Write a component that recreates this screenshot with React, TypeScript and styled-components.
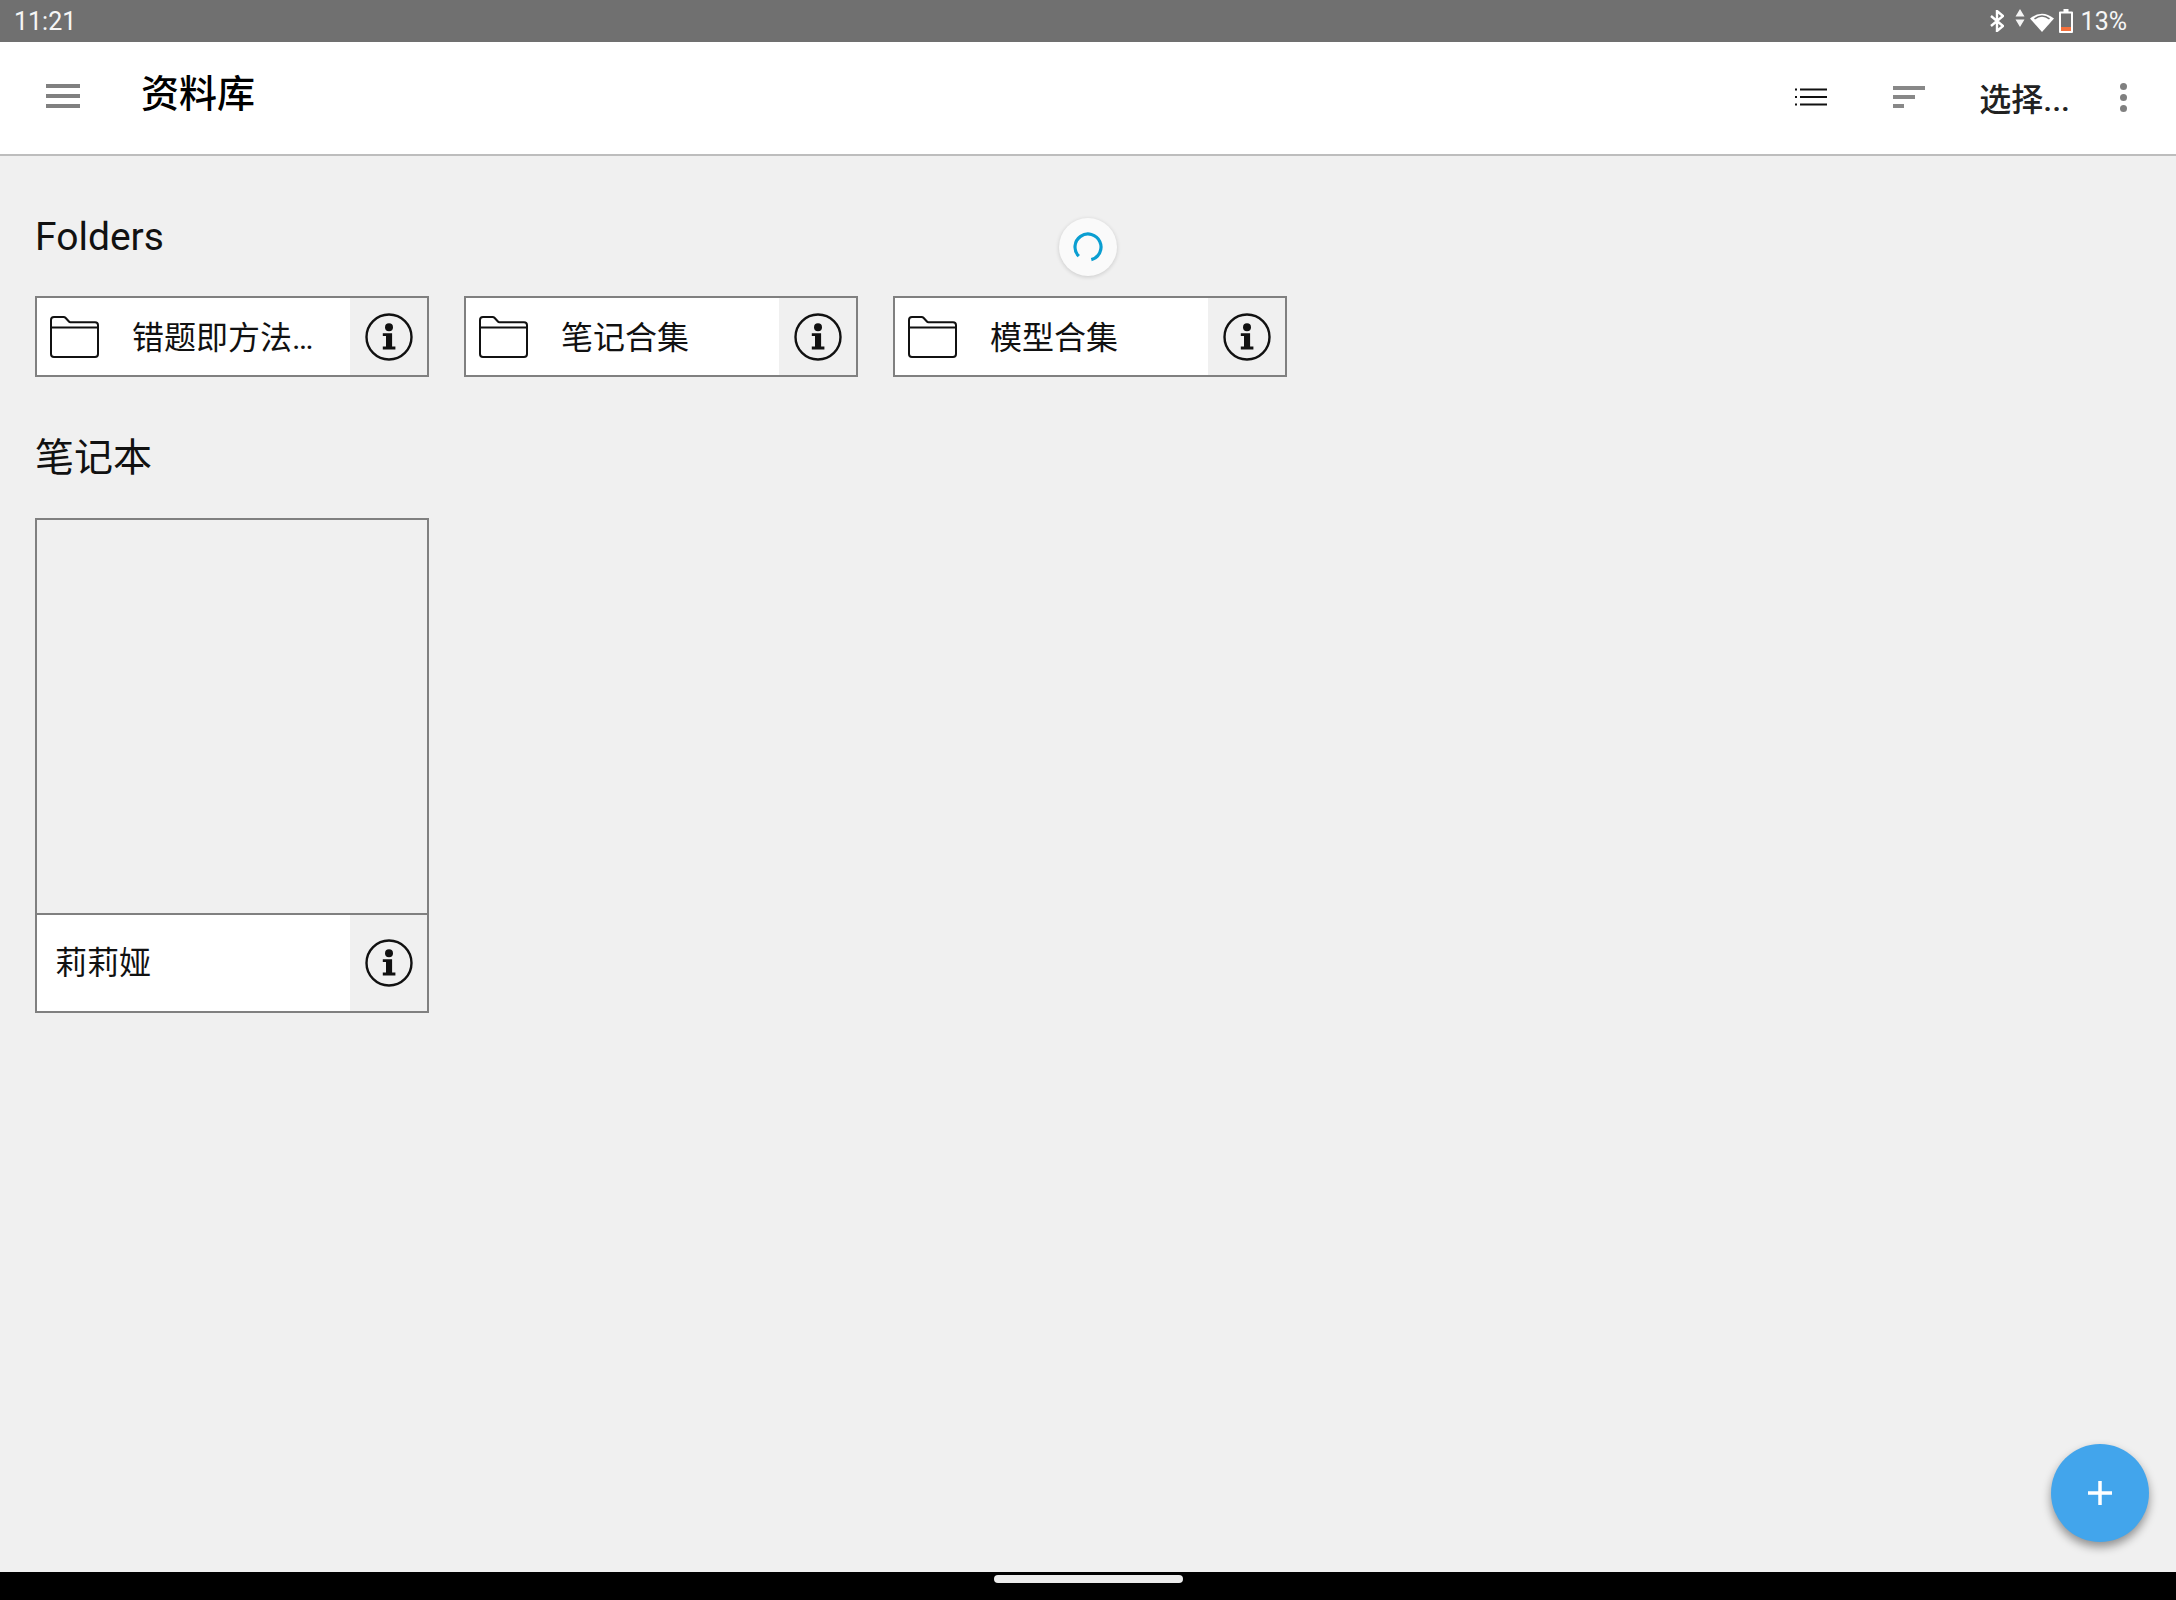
import styled, { createGlobalStyle } from 'styled-components';

const GlobalStyle = createGlobalStyle`
   html,
   body {
      margin: 0;
      padding: 0;
      background: #f0f0f0;
   }

   * {
      box-sizing: border-box;
   }
`;

const cjk = `Roboto, "Noto Sans CJK SC", sans-serif`;

const InfoIcon = () => (
   <svg width="48" height="48" viewBox="0 0 48 48">
      <circle cx="24" cy="24" r="22.500" fill="none" stroke="#111" strokeWidth="2.400" />
      <circle cx="24" cy="14.200" r="4" fill="#111" />
      <path d="M17.800 20.200h9.300v13.400H30.400v3H17.800v-3h3.200V23h-3.200z" fill="#111" />
   </svg>
);

const FolderIcon = () => (
   <svg width="49" height="42" viewBox="0 0 49 42" fill="none" stroke="#111" strokeWidth="2">
      <path d="M1 9V4a3 3 0 0 1 3-3h9.500a3 3 0 0 1 2.200 1l3.200 3.500a2 2 0 0 0 1.500.7H45a3 3 0 0 1 3 3V38a3 3 0 0 1-3 3H4a3 3 0 0 1-3-3z" />
      <path d="M1 11.500h47" />
   </svg>
);

const folders = ['错题即方法…', '笔记合集', '模型合集'];

const App = () => {
   return (
      <Page>
         <GlobalStyle />
         <StatusBar>
            <Time>11:21</Time>
            <StatusIcons>
               <BluetoothIcon width="14" height="22" viewBox="0 0 14 22" fill="none" stroke="#fff" strokeWidth="2.400">
                  <path d="M1 6l12 10-6 5V1l6 5-12 10" />
               </BluetoothIcon>
               <ArrowsIcon width="10" height="18" viewBox="0 0 10 18" fill="#f4f4f4">
                  <path d="M5 0l4.500 7.500h-9zM5 18L.5 10.500h9z" />
               </ArrowsIcon>
               <svg width="26" height="22" viewBox="0 0 26 22" fill="none">
                  <path d="M13 22L1 8.500Q13 -1 25 8.500z" fill="#fff" />
                  <path d="M5.500 8.800Q13 3 20.500 8.800" stroke="#707070" strokeWidth="1.500" />
               </svg>
               <svg width="14" height="24" viewBox="0 0 14 24">
                  <path d="M4.500 0h5v2.500H13a1 1 0 0 1 1 1V23a1 1 0 0 1-1 1H1a1 1 0 0 1-1-1V3.500a1 1 0 0 1 1-1h3.500z" fill="#fff" />
                  <rect x="2" y="4.500" width="10" height="13.500" fill="#707070" />
                  <rect x="2" y="18" width="10" height="4" fill="#f4703c" />
               </svg>
               <Battery>13%</Battery>
            </StatusIcons>
         </StatusBar>

         <AppBar>
            <Menu>
               <MenuLine />
               <MenuLine />
               <MenuLine />
            </Menu>
            <Title>资料库</Title>
            <Actions>
               <svg width="32" height="20" viewBox="0 0 32 20">
                  <path d="M5 2.500h27M5 10h27M5 17.500h27" stroke="#111" strokeWidth="1.800" />
                  <path d="M0 2.500h2M0 10h2M0 17.500h2" stroke="#111" strokeWidth="1.800" />
               </svg>
               <SortIcon>
                  <SortLine $width={32} />
                  <SortLine $width={22} />
                  <SortLine $width={11} />
               </SortIcon>
               <SelectLabel>选择...</SelectLabel>
               <MoreIcon>
                  <Dot />
                  <Dot />
                  <Dot />
               </MoreIcon>
            </Actions>
         </AppBar>

         <Main>
            <FolderTitle>Folders</FolderTitle>
            <FolderRow>
               {folders.map(name => (
                  <FolderCard key={name}>
                     <FolderBody>
                        <FolderIcon />
                        <FolderName>{name}</FolderName>
                     </FolderBody>
                     <InfoButton>
                        <InfoIcon />
                     </InfoButton>
                  </FolderCard>
               ))}
            </FolderRow>

            <NotebookTitle>笔记本</NotebookTitle>
            <NotebookCard>
               <Cover />
               <NotebookFooter>
                  <NotebookName>莉莉娅</NotebookName>
                  <InfoButton>
                     <InfoIcon />
                  </InfoButton>
               </NotebookFooter>
            </NotebookCard>
         </Main>

         <NavBar>
            <HomePill />
         </NavBar>

         <Spinner>
            <svg width="32" height="32" viewBox="0 0 32 32" fill="none">
               <path d="M6.800 25.200A13 13 0 1 1 19.300 28.600" stroke="#0a9ed1" strokeWidth="3.200" />
            </svg>
         </Spinner>

         <Fab>
            <svg width="26" height="26" viewBox="0 0 26 26">
               <path d="M13 1v24M1 13h24" stroke="#fff" strokeWidth="3.500" />
            </svg>
         </Fab>
      </Page>
   );
};

export default App;

const Page = styled.div`
   position: relative;
   display: flex;
   flex-direction: column;
   width: 2176px;
   height: 1600px;
   overflow: hidden;
   background: #f0f0f0;
   font-family: ${cjk};
`;

const StatusBar = styled.div`
   display: flex;
   align-items: center;
   justify-content: space-between;
   flex: 0 0 42px;
   padding: 2px 49px 0 14px;
   background: #707070;
   color: #f6f6f6;
   font-size: 25px;
`;

const Time = styled.span`
   line-height: 40px;
`;

const StatusIcons = styled.div`
   display: flex;
   align-items: center;
   gap: 4px;
   margin-top: -2px;
`;

const BluetoothIcon = styled.svg`
   margin-right: 7px;
`;

const ArrowsIcon = styled.svg`
   margin-bottom: 6px;
`;

const Battery = styled.span`
   margin-left: 4px;
   line-height: 40px;
   margin-top: 2px;
`;

const AppBar = styled.div`
   display: flex;
   align-items: center;
   flex: 0 0 114px;
   padding: 0 49px 0 46px;
   background: #fff;
   border-bottom: 2px solid #bdbdbd;
`;

const Menu = styled.div`
   display: flex;
   flex-direction: column;
   gap: 6px;
   width: 34px;
   margin-top: -4px;
`;

const MenuLine = styled.div`
   height: 4px;
   background: #808080;
`;

const Title = styled.h1`
   margin: 0 0 16px 61px;
   color: #000;
   font-size: 38px;
   font-weight: 500;
`;

const Actions = styled.div`
   display: flex;
   align-items: center;
   margin-left: auto;
   padding-bottom: 2px;
`;

const SortIcon = styled.div`
   display: flex;
   flex-direction: column;
   gap: 5px;
   width: 32px;
   margin-left: 66px;
`;

const SortLine = styled.div<{ $width: number }>`
   width: ${p => p.$width}px;
   height: 4px;
   background: #888;
`;

const SelectLabel = styled.span`
   margin-left: 54px;
   color: #212121;
   font-size: 32px;
   font-weight: 500;
`;

const MoreIcon = styled.div`
   display: flex;
   flex-direction: column;
   gap: 4px;
   margin-left: 50px;
`;

const Dot = styled.div`
   width: 7px;
   height: 7px;
   border-radius: 50%;
   background: #808080;
`;

const Main = styled.div`
   flex: 1;
   padding: 53px 0 0 35px;
`;

const SectionTitle = styled.h2`
   margin: 0;
   color: #111;
   font-size: 39px;
   font-weight: 400;
   line-height: 56px;
`;

const FolderTitle = styled(SectionTitle)`
   margin-bottom: 31px;
`;

const NotebookTitle = styled(SectionTitle)`
   margin-top: 53px;
   margin-bottom: 32px;
`;

const FolderRow = styled.div`
   display: flex;
   gap: 35px;
`;

const FolderCard = styled.div`
   display: flex;
   width: 394px;
   height: 81px;
   border: 2px solid #808080;
`;

const FolderBody = styled.div`
   display: flex;
   align-items: center;
   flex: 1;
   padding-left: 13px;
   background: #fff;
`;

const FolderName = styled.span`
   margin: 0 0 4px 33px;
   color: #111;
   font-size: 32px;
`;

const InfoButton = styled.div`
   display: flex;
   align-items: center;
   justify-content: center;
   flex: 0 0 77px;
   background: #f0f0f0;
`;

const NotebookCard = styled.div`
   display: flex;
   flex-direction: column;
   width: 394px;
   height: 495px;
   border: 2px solid #808080;
`;

const Cover = styled.div`
   flex: 1;
   background: #f0f0f0;
   border-bottom: 2px solid #808080;
`;

const NotebookFooter = styled.div`
   display: flex;
   flex: 0 0 96px;
   background: #fff;
`;

const NotebookName = styled.span`
   flex: 1;
   padding: 3px 0 0 18px;
   color: #111;
   font-size: 32px;
   line-height: 90px;
`;

const NavBar = styled.div`
   display: flex;
   justify-content: center;
   flex: 0 0 28px;
   padding-top: 3px;
   background: #000;
`;

const HomePill = styled.div`
   width: 189px;
   height: 8px;
   border-radius: 4px;
   background: #ececec;
`;

const Spinner = styled.div`
   position: absolute;
   left: 1059px;
   top: 218px;
   display: flex;
   align-items: center;
   justify-content: center;
   width: 58px;
   height: 58px;
   border-radius: 50%;
   background: #fafafa;
   box-shadow: 0 1px 4px rgba(0, 0, 0, 0.16);
`;

const Fab = styled.div`
   position: absolute;
   left: 2051px;
   top: 1444px;
   display: flex;
   align-items: center;
   justify-content: center;
   width: 98px;
   height: 98px;
   border-radius: 50%;
   background: #42a5ec;
   box-shadow: 0 5px 10px rgba(0, 0, 0, 0.4);
`;
